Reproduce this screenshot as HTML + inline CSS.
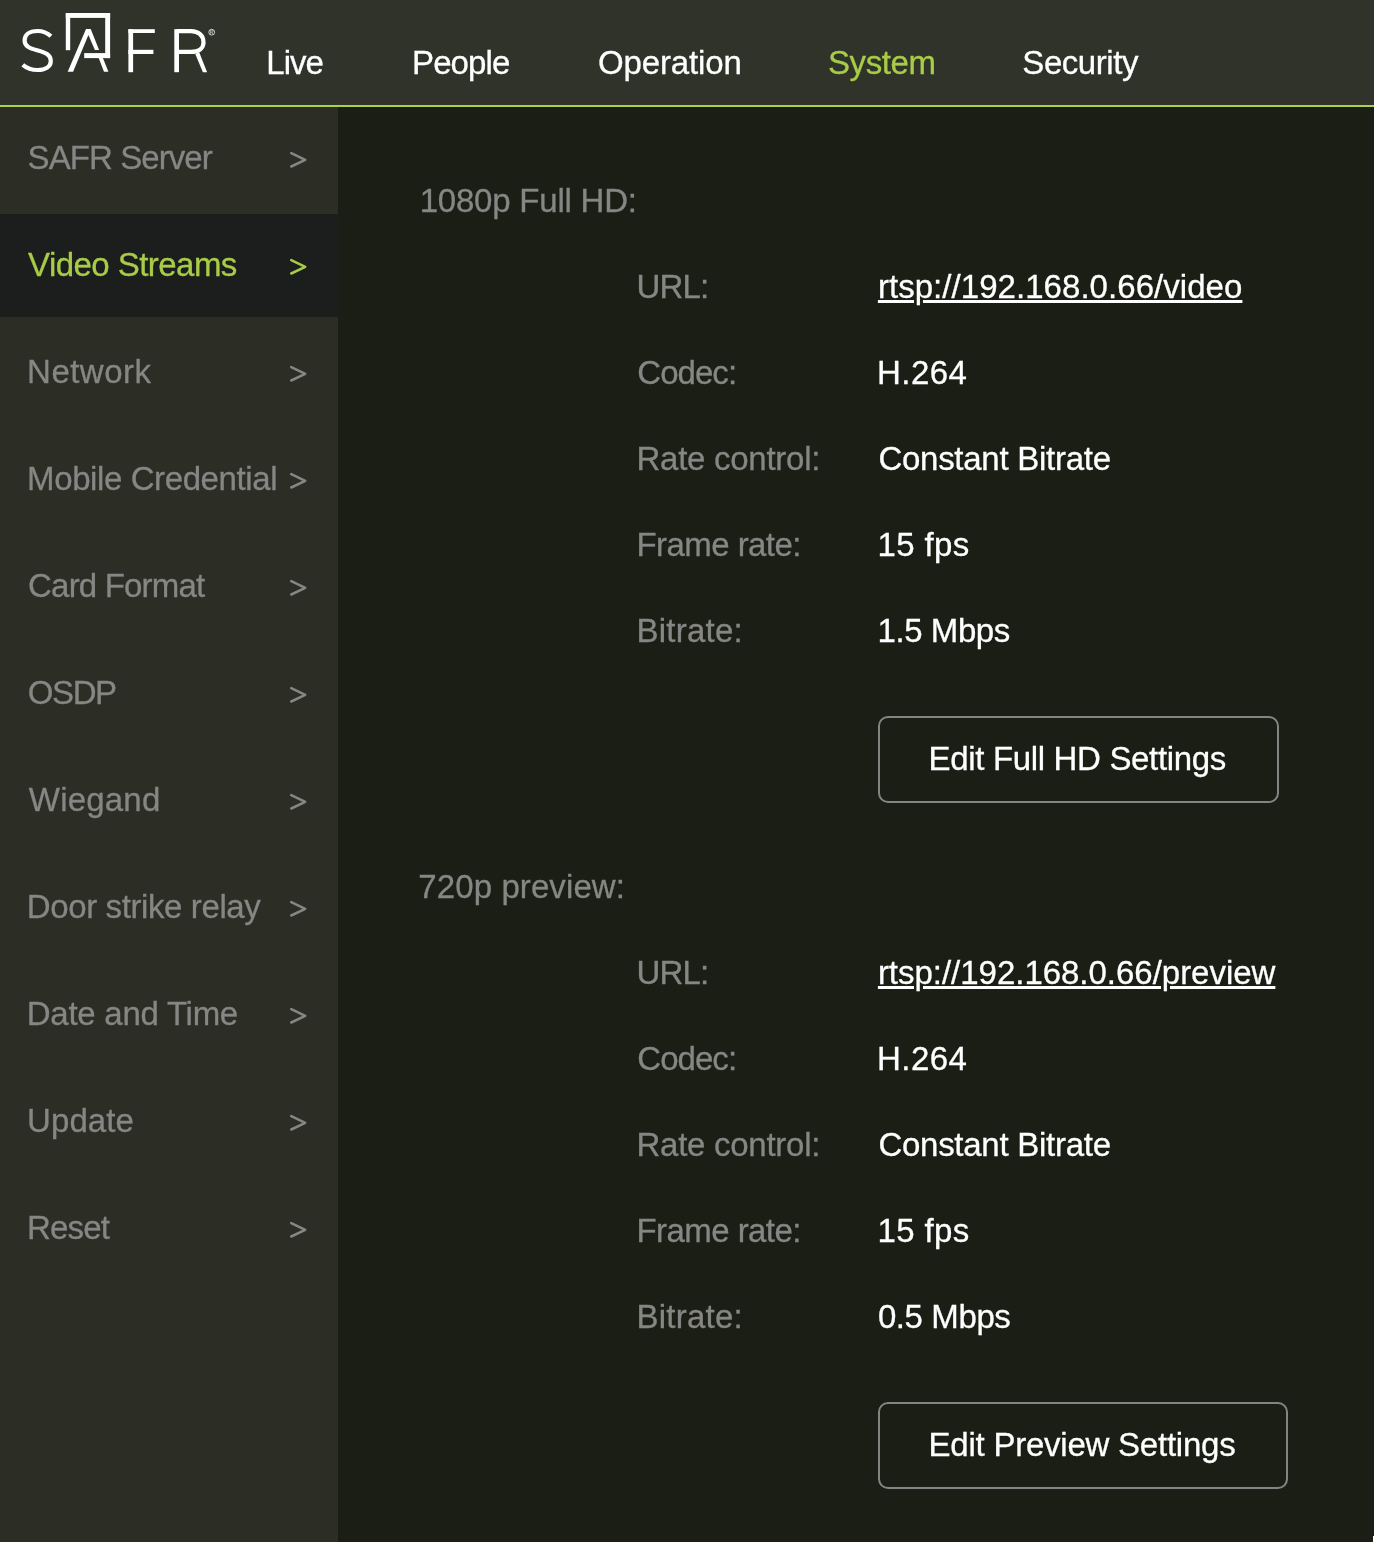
<!DOCTYPE html>
<html><head><meta charset="utf-8"><style>
html,body{margin:0;padding:0;}
body{width:1374px;height:1542px;position:relative;overflow:hidden;background:#1b1e15;font-family:"Liberation Sans",sans-serif;}
.hdr{position:absolute;left:0;top:0;width:1374px;height:105px;background:#30332a;}
.gl{position:absolute;left:0;top:104.5px;width:1374px;height:2.6px;background:#aad246;}
.side{position:absolute;left:0;top:107px;width:338px;height:1435px;background:#2c2d24;}
.act{position:absolute;left:0;top:214px;width:338px;height:103px;background:#1b1e1d;}
.txt{position:absolute;left:0;top:0;width:1374px;height:1542px;will-change:transform;}
.t{position:absolute;font-size:33px;line-height:32px;white-space:nowrap;-webkit-text-stroke:0.3px currentColor;}
.ul{position:absolute;height:3px;background:#fff;}
.u{text-decoration:underline;text-decoration-thickness:3px;text-underline-offset:2px;text-decoration-skip-ink:auto;}
.chev{position:absolute;}
.logo{position:absolute;left:0;top:0;}
.btn{position:absolute;height:83px;border:2px solid #848482;border-radius:10px;}
.corner{position:absolute;left:1373px;top:1536px;width:1px;height:6px;background:#fff;}
</style></head><body>
<div class="hdr"></div>
<div class="gl"></div>
<div class="side"></div>
<div class="act"></div>
<svg class="logo" width="230" height="90" viewBox="0 0 230 90">
<g fill="#ffffff">
<path d="M50.9 36.3 C47 32.5 42 31 37.5 31 C29 31 24.6 35 24.6 40.5 C24.6 47 31 48.5 38 50.5 C45 52.5 50.8 54.5 50.8 61 C50.8 67 45 70 37.5 70 C31 70 26 67.5 22.8 64.8" fill="none" stroke="#fff" stroke-width="4.2"/>
<rect x="65.8" y="13" width="4.4" height="37.2"/>
<rect x="65.8" y="13" width="44.3" height="4.9"/>
<rect x="105.2" y="13" width="4.9" height="45.1"/>
<rect x="84.2" y="53.1" width="25.9" height="5"/>
<path d="M67.7 71.8 L86 29 L90.7 29 L99.1 49.9 L94.9 49.9 L88.4 35.1 L73.1 71.8 Z"/>
<path d="M98.7 58.1 L102.9 58.1 L108.4 71.8 L104 71.8 Z"/>
<rect x="128.4" y="29.2" width="4.7" height="43"/>
<rect x="128.4" y="29.2" width="26.4" height="3.8"/>
<rect x="128.4" y="49.8" width="25" height="4.2"/>
<rect x="174.3" y="29.2" width="4.7" height="43"/>
<path d="M176.65 31.1 H191 C198.5 31.1 203.5 35.5 203.5 42.5 C203.5 48.5 198.5 51.9 191 51.9 H176.65" fill="none" stroke="#fff" stroke-width="4.2"/>
<path d="M195.3 54 L199.2 52.2 L207.1 72.2 L202.9 72.2 Z"/>
<circle cx="211.7" cy="32.2" r="2.9" fill="none" stroke="#ddd" stroke-width="0.9"/><path d="M210.6 34.3 V30.2 H212 C213.3 30.2 213.3 32.2 212 32.2 H210.6 M212 32.2 L213 34.3" fill="none" stroke="#ccc" stroke-width="0.7"/>
</g></svg>
<div class="btn" style="left:878px;top:716px;width:397px"></div>
<div class="btn" style="left:878px;top:1402px;width:406px"></div>
<div class="txt"><div class="t" style="left:266.30px;top:47px;color:#ffffff;letter-spacing:-1.000px">Live</div>
<div class="t" style="left:412.10px;top:47px;color:#ffffff;letter-spacing:-0.920px">People</div>
<div class="t" style="left:598.10px;top:47px;color:#ffffff;letter-spacing:-0.150px">Operation</div>
<div class="t" style="left:828.00px;top:47px;color:#a9cc48;letter-spacing:-0.400px">System</div>
<div class="t" style="left:1022.30px;top:47px;color:#ffffff;letter-spacing:-0.429px">Security</div>
<div class="t" style="left:27.60px;top:142px;color:#868685;letter-spacing:-0.920px">SAFR Server</div>
<div class="t" style="left:28.10px;top:249px;color:#a9cc48;letter-spacing:-0.550px">Video Streams</div>
<div class="t" style="left:27.10px;top:356px;color:#868685;letter-spacing:0.467px">Network</div>
<div class="t" style="left:27.10px;top:463px;color:#868685;letter-spacing:-0.400px">Mobile Credential</div>
<div class="t" style="left:28.10px;top:570px;color:#868685;letter-spacing:-0.820px">Card Format</div>
<div class="t" style="left:27.80px;top:677px;color:#868685;letter-spacing:-1.400px">OSDP</div>
<div class="t" style="left:28.80px;top:784px;color:#868685;letter-spacing:0.200px">Wiegand</div>
<div class="t" style="left:26.80px;top:891px;color:#868685;letter-spacing:-0.387px">Door strike relay</div>
<div class="t" style="left:26.80px;top:998px;color:#868685;letter-spacing:-0.267px">Date and Time</div>
<div class="t" style="left:27.10px;top:1105px;color:#868685;letter-spacing:0.080px">Update</div>
<div class="t" style="left:27.10px;top:1212px;color:#868685;letter-spacing:-0.850px">Reset</div>
<div class="t" style="left:419.70px;top:185px;color:#868685;letter-spacing:-0.215px">1080p Full HD:</div>
<div class="t" style="left:636.50px;top:271px;color:#868685;letter-spacing:-0.800px">URL:</div>
<div class="t" style="left:877.90px;top:271px;color:#ffffff;letter-spacing:0.050px"><span class="u">rtsp://192.168.0.66/video</span></div>
<div class="t" style="left:637.30px;top:357px;color:#868685;letter-spacing:-0.960px">Codec:</div>
<div class="t" style="left:876.90px;top:357px;color:#ffffff;letter-spacing:0.500px">H.264</div>
<div class="t" style="left:636.50px;top:443px;color:#868685;letter-spacing:-0.267px">Rate control:</div>
<div class="t" style="left:878.40px;top:443px;color:#ffffff;letter-spacing:-0.267px">Constant Bitrate</div>
<div class="t" style="left:636.50px;top:529px;color:#868685;letter-spacing:-0.560px">Frame rate:</div>
<div class="t" style="left:877.50px;top:529px;color:#ffffff;letter-spacing:0.360px">15 fps</div>
<div class="t" style="left:636.50px;top:615px;color:#868685;letter-spacing:0.229px">Bitrate:</div>
<div class="t" style="left:877.50px;top:615px;color:#ffffff;letter-spacing:-0.429px">1.5 Mbps</div>
<div class="t" style="left:418.30px;top:871px;color:#868685;letter-spacing:0.100px">720p preview:</div>
<div class="t" style="left:636.50px;top:957px;color:#868685;letter-spacing:-0.800px">URL:</div>
<div class="t" style="left:877.90px;top:957px;color:#ffffff;letter-spacing:-0.023px"><span class="u">rtsp://192.168.0.66/preview</span></div>
<div class="t" style="left:637.30px;top:1043px;color:#868685;letter-spacing:-0.960px">Codec:</div>
<div class="t" style="left:876.90px;top:1043px;color:#ffffff;letter-spacing:0.500px">H.264</div>
<div class="t" style="left:636.50px;top:1129px;color:#868685;letter-spacing:-0.267px">Rate control:</div>
<div class="t" style="left:878.40px;top:1129px;color:#ffffff;letter-spacing:-0.267px">Constant Bitrate</div>
<div class="t" style="left:636.50px;top:1215px;color:#868685;letter-spacing:-0.560px">Frame rate:</div>
<div class="t" style="left:877.50px;top:1215px;color:#ffffff;letter-spacing:0.360px">15 fps</div>
<div class="t" style="left:636.50px;top:1301px;color:#868685;letter-spacing:0.229px">Bitrate:</div>
<div class="t" style="left:877.90px;top:1301px;color:#ffffff;letter-spacing:-0.400px">0.5 Mbps</div>
<div class="t" style="left:928.50px;top:743px;color:#ffffff;letter-spacing:-0.330px">Edit Full HD Settings</div>
<div class="t" style="left:928.50px;top:1429px;color:#ffffff;letter-spacing:-0.230px">Edit Preview Settings</div>
</div><svg class="chev" style="left:287px;top:148.9px" width="24" height="22" viewBox="0 0 24 22"><polyline points="4.25,4.1 18.25,10.8 4.25,17.5" fill="none" stroke="#868685" stroke-width="2.5" stroke-linejoin="round" stroke-linecap="round"/></svg>
<svg class="chev" style="left:287px;top:255.9px" width="24" height="22" viewBox="0 0 24 22"><polyline points="4.25,4.1 18.25,10.8 4.25,17.5" fill="none" stroke="#a9cc48" stroke-width="2.5" stroke-linejoin="round" stroke-linecap="round"/></svg>
<svg class="chev" style="left:287px;top:362.9px" width="24" height="22" viewBox="0 0 24 22"><polyline points="4.25,4.1 18.25,10.8 4.25,17.5" fill="none" stroke="#868685" stroke-width="2.5" stroke-linejoin="round" stroke-linecap="round"/></svg>
<svg class="chev" style="left:287px;top:469.9px" width="24" height="22" viewBox="0 0 24 22"><polyline points="4.25,4.1 18.25,10.8 4.25,17.5" fill="none" stroke="#868685" stroke-width="2.5" stroke-linejoin="round" stroke-linecap="round"/></svg>
<svg class="chev" style="left:287px;top:576.9px" width="24" height="22" viewBox="0 0 24 22"><polyline points="4.25,4.1 18.25,10.8 4.25,17.5" fill="none" stroke="#868685" stroke-width="2.5" stroke-linejoin="round" stroke-linecap="round"/></svg>
<svg class="chev" style="left:287px;top:683.9px" width="24" height="22" viewBox="0 0 24 22"><polyline points="4.25,4.1 18.25,10.8 4.25,17.5" fill="none" stroke="#868685" stroke-width="2.5" stroke-linejoin="round" stroke-linecap="round"/></svg>
<svg class="chev" style="left:287px;top:790.9px" width="24" height="22" viewBox="0 0 24 22"><polyline points="4.25,4.1 18.25,10.8 4.25,17.5" fill="none" stroke="#868685" stroke-width="2.5" stroke-linejoin="round" stroke-linecap="round"/></svg>
<svg class="chev" style="left:287px;top:897.9px" width="24" height="22" viewBox="0 0 24 22"><polyline points="4.25,4.1 18.25,10.8 4.25,17.5" fill="none" stroke="#868685" stroke-width="2.5" stroke-linejoin="round" stroke-linecap="round"/></svg>
<svg class="chev" style="left:287px;top:1004.9px" width="24" height="22" viewBox="0 0 24 22"><polyline points="4.25,4.1 18.25,10.8 4.25,17.5" fill="none" stroke="#868685" stroke-width="2.5" stroke-linejoin="round" stroke-linecap="round"/></svg>
<svg class="chev" style="left:287px;top:1111.9px" width="24" height="22" viewBox="0 0 24 22"><polyline points="4.25,4.1 18.25,10.8 4.25,17.5" fill="none" stroke="#868685" stroke-width="2.5" stroke-linejoin="round" stroke-linecap="round"/></svg>
<svg class="chev" style="left:287px;top:1218.9px" width="24" height="22" viewBox="0 0 24 22"><polyline points="4.25,4.1 18.25,10.8 4.25,17.5" fill="none" stroke="#868685" stroke-width="2.5" stroke-linejoin="round" stroke-linecap="round"/></svg>
<div class="corner"></div>
</body></html>
